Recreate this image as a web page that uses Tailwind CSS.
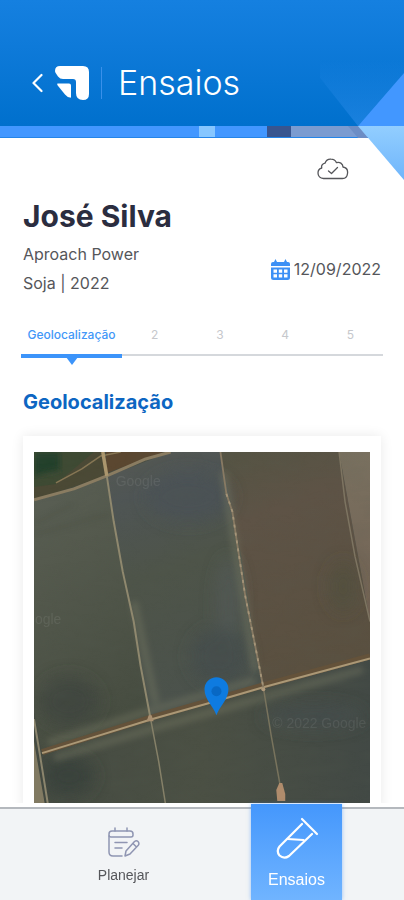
<!DOCTYPE html>
<html lang="pt-BR">
<head>
    <meta charset="UTF-8">
    <meta name="viewport" content="width=device-width, initial-scale=1.0">
    <title>Ensaios</title>
    <script src="https://cdn.jsdelivr.net/npm/@tailwindcss/browser@4"></script>
</head>
<body class="bg-white font-['Liberation_Sans',Arial,sans-serif] text-[#55565a] h-screen flex flex-col overflow-hidden">

    <!-- Header -->
    <header class="relative shrink-0">
        <div class="flex items-center h-[126px] pt-10 pl-8 bg-linear-to-b from-[#1580e0] to-[#0070cd] text-white">
            <button type="button" aria-label="Voltar" class="mr-3">
                <svg class="w-[11px] h-5" viewBox="0 0 11 20" fill="none" stroke="currentColor" stroke-width="2.2" stroke-linecap="round" stroke-linejoin="round">
                    <path d="M9.500 2 L1.500 10 L9.500 18"/>
                </svg>
            </button>
            <svg class="w-[34px] h-[34px]" viewBox="0 0 34 34" fill="currentColor" aria-hidden="true">
                <path d="M5 0 H28 Q34 0 34 6 V28 Q34 34 28 34 Q21 34 21 27 V16 Q21 13 18 13 H8 Q5 13 3 10.500 L1 7.500 Q0 6 0 5 Q0 0 5 0 Z"/>
                <path d="M2.500 17.500 H14 Q16 17.500 16 19.500 V31 Q16 32 15 31.500 Q12 31 10 28.500 L3.500 20.500 Q1.500 18 2.500 17.500 Z"/>
            </svg>
            <div class="w-px h-8 ml-3 mr-4 bg-[#3a90ea]"></div>
            <h1 class="font-['Inter',sans-serif] font-light text-[34px] leading-10">Ensaios</h1>
        </div>
        <div class="flex h-3 border-b border-[#2484e8]">
            <div class="w-[199px] bg-[#4297ff]"></div>
            <div class="w-4 bg-[#86c6ff]"></div>
            <div class="w-[52px] bg-[#4297ff]"></div>
            <div class="w-6 bg-[#38558f]"></div>
            <div class="flex-1 bg-[#7b9bd0]"></div>
        </div>
        <!-- Facets over the right corner -->
        <svg class="absolute right-0 top-0 w-[84px] h-[180px]" viewBox="0 0 84 180" aria-hidden="true">
            <defs>
                <linearGradient id="facet" gradientUnits="userSpaceOnUse" x1="0" y1="60" x2="0" y2="126">
                    <stop offset="0" stop-color="#2f8eec" stop-opacity="0"/>
                    <stop offset="1" stop-color="#2f8eec" stop-opacity=".55"/>
                </linearGradient>
                <linearGradient id="facetLow" x1="0" y1="0" x2="0" y2="1">
                    <stop offset="0" stop-color="#92ceff"/>
                    <stop offset="1" stop-color="#6fb5fb"/>
                </linearGradient>
            </defs>
            <path d="M-14 60 H84 V73 L38 126 Z" fill="url(#facet)"/>
            <path d="M28 126 H38 L48 138 H38 Z" fill="#6c8dc5"/>
            <path d="M84 73 V126 H38 Z" fill="#4297ff"/>
            <path d="M38 126 H84 V180 Z" fill="url(#facetLow)"/>
        </svg>
    </header>

    <main class="flex-1 min-h-0 overflow-hidden pt-5 px-[23px]">
        <div class="flex justify-end pr-8">
            <svg class="w-8 h-[22px]" viewBox="0 0 32 22" fill="none" stroke="#55565a" stroke-width="1.300" stroke-linecap="round" stroke-linejoin="round" role="img" aria-label="Sincronizado">
                <path d="M6.500 20.500 C3 20.500 1 18 1 15 C1 12.500 2.500 10.500 4.800 10 C4 8 5.500 5.500 8 5.200 C9 2.500 11.500 1 14 1.200 C16.500 1.200 18.500 2.500 19.500 4.700 C22.500 3.500 26 5.500 26 9 C29 9.500 31 12 30.500 15.500 C30.200 18.500 28 20.500 25.500 20.500 Z"/>
                <path d="M11.500 13 L14.500 15.500 L20.500 9.500"/>
            </svg>
        </div>

        <h2 class="mt-4 font-['Inter',sans-serif] font-bold text-[30px] leading-10 text-[#2b2d3f]">José Silva</h2>
        <div class="flex items-center justify-between mt-1 font-['Inter',sans-serif]">
            <div class="text-base leading-[29px]">
                <p>Aproach Power</p>
                <p>Soja | 2022</p>
            </div>
            <div class="flex items-center gap-1">
                <svg class="w-[19px] h-[21px]" viewBox="0 0 19 21" fill="#3c90f5" aria-hidden="true">
                    <path d="M0 7 V5 Q0 3 2 3 H3 L4.500 0 L6 3 H13 L14.500 0 L16 3 H17 Q19 3 19 5 V7 Z"/>
                    <path fill-rule="evenodd" d="M0 8.500 H19 V18.500 Q19 21 16.500 21 H2.500 Q0 21 0 18.500 Z M2.500 10.500 V13.700 H6 V10.500 Z M7.800 10.500 V13.700 H11.200 V10.500 Z M13 10.500 V13.700 H16.500 V10.500 Z M2.500 15.300 V18.500 H6 V15.300 Z M7.800 15.300 V18.500 H11.200 V15.300 Z M13 15.300 V18.500 H16.500 V15.300 Z"/>
                </svg>
                <time datetime="2022-09-12" class="text-base leading-5">12/09/2022</time>
            </div>
        </div>

        <!-- Steps -->
        <nav class="flex mt-[25px] -mx-0.5 text-center font-['Inter',sans-serif] text-xs leading-4 text-[#c6c8cc]" aria-label="Etapas">
            <a href="#geo" class="relative w-[101px] h-[35px] pt-1 font-medium text-[#4297f8] border-b-4 border-[#3c94fa]">
                Geolocalização
                <svg class="absolute left-1/2 -translate-x-1/2 top-[34px] w-3 h-2" viewBox="0 0 12 8" fill="#3c94fa"><path d="M0 0 H12 L6 8 Z"/></svg>
            </a>
            <a href="#2" class="flex-1 h-[33px] pt-1 border-b-2 border-[#d5d8dc]">2</a>
            <a href="#3" class="flex-1 h-[33px] pt-1 border-b-2 border-[#d5d8dc]">3</a>
            <a href="#4" class="flex-1 h-[33px] pt-1 border-b-2 border-[#d5d8dc]">4</a>
            <a href="#5" class="flex-1 h-[33px] pt-1 border-b-2 border-[#d5d8dc]">5</a>
        </nav>

        <h3 id="geo" class="mt-7 font-['Inter',sans-serif] font-bold text-[20px] leading-8 text-[#0d66c2]">Geolocalização</h3>

        <!-- Map card -->
        <section class="mt-[18px] px-[11px] pt-4 bg-white shadow-[0_0_12px_rgba(0,0,0,0.09)]">
            <svg class="block w-full" viewBox="0 0 337 360" role="img" aria-label="Mapa">
                <defs>
                    <linearGradient id="f1" x1="0" y1="0" x2=".3" y2="1">
                        <stop offset="0" stop-color="#5a5f55"/><stop offset=".3" stop-color="#555a4e"/><stop offset="1" stop-color="#474d41"/>
                    </linearGradient>
                    <linearGradient id="f2" x1="0" y1="0" x2=".2" y2="1">
                        <stop offset="0" stop-color="#555953"/><stop offset=".2" stop-color="#4f5555"/><stop offset=".5" stop-color="#4e5449"/><stop offset="1" stop-color="#4b524c"/>
                    </linearGradient>
                    <linearGradient id="f3" x1="0" y1="0" x2=".2" y2="1">
                        <stop offset="0" stop-color="#555444"/><stop offset=".3" stop-color="#5e5346"/><stop offset="1" stop-color="#5a5040"/>
                    </linearGradient>
                    <linearGradient id="f4" x1="0" y1="0" x2="0" y2="1">
                        <stop offset="0" stop-color="#7a7160"/><stop offset="1" stop-color="#726254"/>
                    </linearGradient>
                    <linearGradient id="f5" x1="0" y1="0" x2="1" y2="0">
                        <stop offset="0" stop-color="#454b42"/><stop offset=".5" stop-color="#4b5044"/><stop offset="1" stop-color="#424945"/>
                    </linearGradient>
                    <filter id="soft" x="-30%" y="-30%" width="160%" height="160%"><feGaussianBlur stdDeviation="8"/></filter>
                    <filter id="edge" x="-10%" y="-10%" width="120%" height="120%"><feGaussianBlur stdDeviation="3"/></filter>
                    <filter id="grain" x="0" y="0" width="100%" height="100%">
                        <feTurbulence type="fractalNoise" baseFrequency=".03 .08" numOctaves="4" seed="4"/>
                        <feColorMatrix values="0 0 0 0 .1  0 0 0 0 .12  0 0 0 0 .09  1.200 0 0 0 -.45"/>
                    </filter>
                </defs>
                <!-- fields -->
                <rect width="337" height="360" fill="url(#f5)"/>
                <path d="M0 49 L72 25 L100 175 L118 267 L8 301 L0 260 Z" fill="url(#f1)"/>
                <path d="M72 25 L137 0 H187 L208 105 L229 236 L118 267 L92 140 Z" fill="url(#f2)"/>
                <path d="M187 0 H306 L337 170 V208 L229 238 L208 105 Z" fill="url(#f3)"/>
                <path d="M306 0 H337 V170 Z" fill="url(#f4)"/>
                <path d="M0 0 H68 L72 24 L0 48 Z" fill="#4b4935"/>
                <path d="M0 0 H60 L22 32 L0 35 Z" fill="#3e4a33"/>
                <path d="M0 0 H26 V18 L0 24 Z" fill="#243f2a" filter="url(#edge)"/>
                <path d="M72 0 H130 L73 21 Z" fill="#5b4730"/>
                <!-- tone changes inside the fields -->
                <g filter="url(#soft)">
                    <ellipse cx="155" cy="45" rx="42" ry="25" fill="#4a5256" opacity=".8"/>
                    <ellipse cx="195" cy="150" rx="12" ry="45" fill="#565c5e" opacity=".5"/>
                    <ellipse cx="185" cy="205" rx="28" ry="28" fill="#444d4e" opacity=".8"/>
                    <ellipse cx="35" cy="250" rx="30" ry="25" fill="#3f463d" opacity=".8"/>
                    <ellipse cx="35" cy="325" rx="25" ry="20" fill="#39413c" opacity=".9"/>
                    <ellipse cx="280" cy="265" rx="50" ry="12" fill="#444e4e" opacity=".8"/>
                    <ellipse cx="310" cy="135" rx="14" ry="25" fill="#4f4e3e" opacity=".6"/>
                </g>
                <path d="M0 72 L40 52 M0 83 L76 62" stroke="#3c4239" stroke-width="2" opacity=".4" fill="none" filter="url(#edge)"/>
                <path d="M14 292 L118 259 L222 229 M100 150 L122 252 M190 20 L222 220 M20 307 L124 276 L330 218" stroke="#7a7b66" stroke-width="8" opacity=".4" fill="none" filter="url(#edge)"/>
                <rect width="337" height="360" filter="url(#grain)" opacity=".2"/>
                <!-- dirt roads -->
                <g fill="none" stroke-linejoin="round">
                    <path d="M8 301 L116 267 L230 234 L337 205" stroke="#64523a" stroke-width="6"/>
                    <path d="M8 302 L60 286 L118 268 L175 252 L230 236 L337 207" stroke="#ab9876" stroke-width="2"/>
                    <path d="M0 48 L40 37 L73 24 L112 7 L137 0" stroke="#8a7c61" stroke-width="3"/>
                    <path d="M22 31 L48 17 L67 4 L87 0" stroke="#867654" stroke-width="1.500"/>
                    <path d="M69 0 L73 24" stroke="#ab966d" stroke-width="3.500"/>
                    <path d="M73 24 L80 70 L89 120 L100 170 L107 215 L117 268" stroke="#8f886e" stroke-width="2"/>
                    <path d="M117 268 L125 310 L133 360" stroke="#858068" stroke-width="1.500"/>
                    <path d="M187 0 L193 42 L199 60 L205 100 L212 145 L219 180 L230 236" stroke="#887a63" stroke-width="1.800"/>
                    <path d="M193 42 L199 60 L205 100 L212 145 L219 180 L230 236" stroke="#a59579" stroke-width="1.800" stroke-dasharray="3 5"/>
                    <path d="M230 236 L238 285 L247 335" stroke="#78735d" stroke-width="1.500"/>
                    <path d="M306 0 L312 50 L322 105 L337 170" stroke="#7d7461" stroke-width="1.500"/>
                    <path d="M0 268 L6 304 L15 360" stroke="#8b856d" stroke-width="2"/>
                </g>
                <path d="M0 290 L12 360 H0 Z" fill="#817a62"/>
                <path d="M243 339 L246 332 L249 332 L252 343 V350 H244 Z" fill="#b08c6c"/>
                <path d="M113 270 L115 264 H118 L120 270 Z" fill="#a98f70"/>
                <circle cx="230" cy="238" r="2" fill="#b09a7b"/>
                <!-- watermarks -->
                <g fill="#ffffff" fill-opacity=".08" font-family="Liberation Sans, Arial, sans-serif" font-size="14">
                    <text x="82" y="34">Google</text>
                    <text x="1" y="173">ogle</text>
                    <text x="239" y="277">© 2022 Google</text>
                </g>
                <!-- pin -->
                <path d="M183 264 C179 254 171 248 171 238 A12 12 0 0 1 195 238 C195 248 187 254 183 264 Z" fill="#0e7be0"/>
                <circle cx="183" cy="240" r="5" fill="#0868c4"/>
            </svg>
        </section>
    </main>

    <!-- Bottom bar -->
    <footer class="relative shrink-0 pt-1 bg-white">
        <nav class="flex h-[93px] bg-[#f2f4f6] border-t-2 border-[#b4b8bd]" aria-label="Principal">
            <a href="#planejar" class="flex flex-col items-center flex-1 pt-[18px] pr-1 text-sm leading-5 text-[#55565a]">
                <svg class="w-8 h-[30px] mb-2" viewBox="0 0 32 30" fill="none" stroke="#8f95b2" stroke-width="1.500" stroke-linecap="round" stroke-linejoin="round" aria-hidden="true">
                    <path d="M7 1 V4 M19 1 V4"/>
                    <path d="M4 4 H22 Q25 4 25 7 V8 Q25 10 23 10 H3 Q1 10 1 8 V7 Q1 4 4 4 Z"/>
                    <path d="M1 9 V25 Q1 29 5 29 H14 M7 15.500 H19 M7 21 H14"/>
                    <path d="M17 29 L18 24 L26.500 14.500 Q28.500 13 30 14.500 Q31.500 16 30.500 18 L22 27 Z M25 16.500 L28.500 20"/>
                </svg>
                Planejar
            </a>
            <a href="#ensaios" aria-current="page" class="flex flex-col items-center w-[91px] h-24 -mt-[5px] pt-3 text-base leading-5 text-white bg-linear-to-b from-[#4497fc] to-[#70b4ff] shadow-[0_0_4px_rgba(60,140,240,0.5)] mr-[62px]">
                <svg class="w-[44px] h-[44px] mb-2.5" viewBox="0 0 44 44" fill="none" stroke="currentColor" stroke-width="2.200" stroke-linecap="round" stroke-linejoin="round" aria-hidden="true">
                    <path d="M27 3 L42 18"/>
                    <path d="M27 8 L4.500 30.500 Q1 35 4.500 39.500 Q9 43.500 14 40 L37 18"/>
                    <path d="M12.500 23 L28.500 24"/>
                </svg>
                Ensaios
            </a>
        </nav>
    </footer>

</body>
</html>
